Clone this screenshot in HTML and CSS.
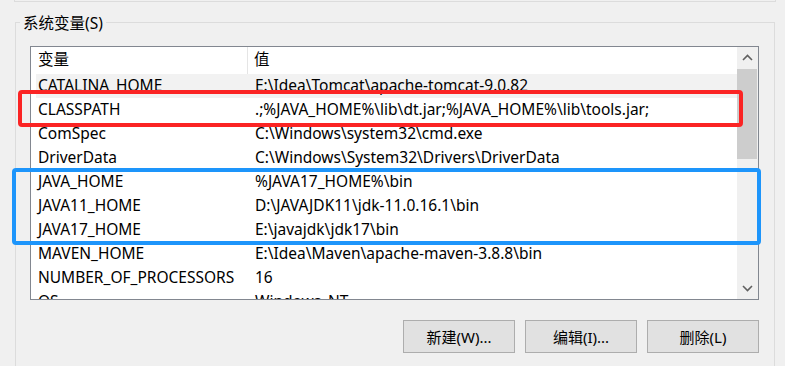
FILE: index.html
```html
<!DOCTYPE HTML>
<html lang="zh-CN">

<head>
    <title>系统变量</title>
    <link rel="stylesheet" href="styles.css">
</head>

<body>
    <div class="prev-group"></div>

    <div class="group">
        <div class="group-title">系统变量(S)</div>

        <div class="listbox">
            <div class="list-main">
                <div class="list-head">
                    <div class="col-name">变量</div>
                    <div class="col-value">值</div>
                </div>
                <div class="rows">
                    <div class="row hot"><span class="name">CATALINA_HOME</span><span class="value">E:\Idea\Tomcat\apache-tomcat-9.0.82</span></div>
                    <div class="row"><span class="name">CLASSPATH</span><span class="value">.;%JAVA_HOME%\lib\dt.jar;%JAVA_HOME%\lib\tools.jar;</span></div>
                    <div class="row"><span class="name">ComSpec</span><span class="value">C:\Windows\system32\cmd.exe</span></div>
                    <div class="row"><span class="name">DriverData</span><span class="value">C:\Windows\System32\Drivers\DriverData</span></div>
                    <div class="row"><span class="name">JAVA_HOME</span><span class="value">%JAVA17_HOME%\bin</span></div>
                    <div class="row"><span class="name">JAVA11_HOME</span><span class="value">D:\JAVAJDK11\jdk-11.0.16.1\bin</span></div>
                    <div class="row"><span class="name">JAVA17_HOME</span><span class="value">E:\javajdk\jdk17\bin</span></div>
                    <div class="row"><span class="name">MAVEN_HOME</span><span class="value">E:\Idea\Maven\apache-maven-3.8.8\bin</span></div>
                    <div class="row"><span class="name">NUMBER_OF_PROCESSORS</span><span class="value">16</span></div>
                    <div class="row"><span class="name">OS</span><span class="value">Windows_NT</span></div>
                </div>
            </div>

            <div class="scrollbar">
                <div class="sb-btn">
                    <svg width="11" height="7" viewBox="0 0 11 7"><path d="M1 6 L5.5 1.5 L10 6" fill="none" stroke="#606060" stroke-width="1.6"/></svg>
                </div>
                <div class="sb-track">
                    <div class="sb-thumb"></div>
                </div>
                <div class="sb-btn">
                    <svg width="11" height="7" viewBox="0 0 11 7"><path d="M1 1 L5.5 5.5 L10 1" fill="none" stroke="#606060" stroke-width="1.6"/></svg>
                </div>
            </div>
        </div>

        <div class="buttons">
            <button class="win-btn">新建(W)...</button>
            <button class="win-btn">编辑(I)...</button>
            <button class="win-btn">删除(L)</button>
        </div>

        <!-- annotation marks drawn over the list -->
        <div class="mark mark-red"></div>
        <div class="mark mark-blue"></div>
    </div>
</body>

</html>
```

FILE: styles.css
```css
body {
    margin: 0;
    background: #f0f0f0;
    font-family: "Noto Sans", "Noto Sans CJK SC", sans-serif;
    font-size: 15.5px;
    color: #000;
    overflow: hidden;
}

.prev-group {
    margin-left: 14px;
    width: 760px;
    height: 1px;
    border: 1px solid #dcdcdc;
    border-top: none;
}

.group {
    position: relative;
    margin: 20px 10px 0 15px;
    border: 1px solid #dcdcdc;
    border-bottom: none;
    padding: 0 15px 0 14px;
    height: 343px;
}

.group-title {
    display: inline-block;
    margin: -10px 0 0 -10px;
    padding: 0 3px;
    background: #f0f0f0;
    line-height: 20px;
    vertical-align: top;
}

.listbox {
    display: flex;
    margin-top: 1px;
    height: 252px;
    border: 1px solid #828790;
    background: #fff;
    overflow: hidden;
}

.list-main {
    flex: 1;
    overflow: hidden;
}

.list-head {
    display: flex;
    height: 27px;
    line-height: 25px;
}

.list-head .col-name {
    width: 209px;
    padding-left: 7px;
    border-right: 1px solid #e5e5e5;
}

.list-head .col-value {
    padding-left: 6px;
}

.row {
    display: flex;
    margin-left: 5px;
    height: 24px;
    line-height: 22px;
    white-space: nowrap;
}

.row.hot {
    background: #f2f2f2;
}

.row .name {
    width: 217px;
    padding-left: 2px;
    flex-shrink: 0;
}

.scrollbar {
    width: 21px;
    display: flex;
    flex-direction: column;
    background: #f0f0f0;
}

.sb-btn {
    height: 21px;
    display: flex;
    align-items: center;
    justify-content: center;
}

.sb-track {
    flex: 1;
}

.sb-thumb {
    margin-top: 1px;
    width: 20px;
    height: 90px;
    background: #cdcdcd;
}

.buttons {
    display: flex;
    justify-content: flex-end;
    gap: 10px;
    margin-top: 20px;
}

.win-btn {
    width: 112px;
    height: 33px;
    background: #e1e1e1;
    border: 1px solid #adadad;
    font-family: "Noto Sans", "Noto Sans CJK SC", sans-serif;
    font-size: 15px;
    color: #000;
    padding: 0;
}

.mark {
    position: absolute;
    box-sizing: border-box;
    border-radius: 4px;
}

.mark-red {
    left: 2px;
    top: 67px;
    width: 725px;
    height: 37px;
    border: 4px solid #fb2424;
}

.mark-blue {
    left: -4px;
    top: 145px;
    width: 749px;
    height: 77px;
    border: 4px solid #1d95fb;
}
```
